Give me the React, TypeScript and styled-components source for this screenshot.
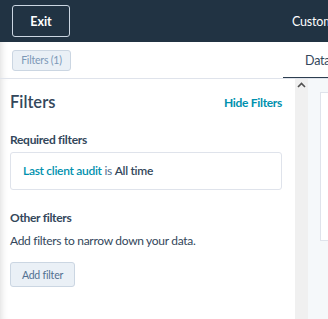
import styled, { createGlobalStyle } from 'styled-components'

const GlobalStyle = createGlobalStyle`
  html, body {
    margin: 0;
    padding: 0;
    background: #ffffff;
  }
  body {
    font-family: Lato, "Liberation Sans", sans-serif;
    color: #33475b;
    overflow: hidden;
  }
`

const Page = styled.div`
  width: 328px;
  height: 319px;
  display: flex;
  flex-direction: column;
  overflow: hidden;
`

const TopBar = styled.header`
  height: 42px;
  flex-shrink: 0;
  background: #213343;
  display: flex;
  align-items: center;
  padding: 0 12px;
  overflow: hidden;
`

const ExitButton = styled.button`
  flex-shrink: 0;
  width: 58px;
  height: 32px;
  border: 1px solid #cbd6e2;
  border-radius: 3px;
  background: transparent;
  color: #ffffff;
  font-family: inherit;
  font-size: 12.5px;
  font-weight: 700;
  padding: 0;
`

const Title = styled.span`
  flex-shrink: 0;
  margin-left: 222px;
  color: #ffffff;
  font-size: 12.5px;
  letter-spacing: -0.2px;
  white-space: nowrap;
`

const SubBar = styled.div`
  height: 36px;
  flex-shrink: 0;
  display: flex;
  align-items: stretch;
  padding-left: 12px;
  border-bottom: 1px solid #dfe3eb;
  box-shadow: inset 8px 0 8px -8px rgba(0, 0, 0, 0.18);
  overflow: hidden;
`

const PillCell = styled.div`
  flex-shrink: 0;
  display: flex;
  align-items: center;
`

const Pill = styled.button`
  width: 59px;
  height: 21px;
  padding: 0;
  border: 1px solid #cbd6e2;
  border-radius: 3px;
  background: #eaf0f6;
  color: #7c98b6;
  font-family: inherit;
  font-size: 10.5px;
  letter-spacing: -0.2px;
`

const Tab = styled.div`
  flex-shrink: 0;
  margin-left: 212px;
  padding-left: 22px;
  display: flex;
  align-items: center;
  font-size: 12.5px;
  letter-spacing: -0.2px;
  color: #33475b;
  white-space: nowrap;
  border-bottom: 3px solid #2d3e50;
  margin-bottom: -2px;
  padding-top: 1px;
`

const Body = styled.div`
  flex: 1;
  display: flex;
  min-height: 0;
`

const Panel = styled.aside`
  width: 295px;
  flex-shrink: 0;
  box-sizing: border-box;
  padding: 11px 13px 0 10px;
  background: #ffffff;
  box-shadow: inset 8px 0 8px -8px rgba(0, 0, 0, 0.18);
  letter-spacing: -0.3px;
`

const PanelHeader = styled.div`
  display: flex;
  align-items: center;
  justify-content: space-between;
  height: 24px;
`

const PanelTitle = styled.h2`
  margin: 0;
  font-size: 16.5px;
  font-weight: 600;
  letter-spacing: 0;
  color: #33475b;
`

const LinkButton = styled.a`
  font-size: 12px;
  font-weight: 700;
  color: #0091ae;
  text-decoration: none;
`

const SectionLabel = styled.h3<{ $top: number }>`
  margin: ${({ $top }) => $top}px 0 0;
  font-size: 12px;
  line-height: 18px;
  font-weight: 700;
  color: #33475b;
`

const FilterBox = styled.div`
  margin-top: 3px;
  padding: 9px 12px;
  border: 1px solid #dfe3eb;
  border-radius: 3px;
  font-size: 12px;
  line-height: 18px;
  color: #516f90;
`

const FilterName = styled.span`
  color: #0091ae;
  font-weight: 600;
`

const FilterValue = styled.span`
  color: #33475b;
  font-weight: 600;
`

const Help = styled.p`
  margin: 5px 0 0;
  font-size: 12px;
  line-height: 18px;
  color: #33475b;
`

const AddButton = styled.button`
  margin-top: 12px;
  width: 65px;
  height: 25px;
  padding: 0;
  border: 1px solid #cbd6e2;
  border-radius: 3px;
  background: #eaf0f6;
  color: #516f90;
  font-family: inherit;
  font-size: 10.5px;
  letter-spacing: -0.2px;
`

const Scrollbar = styled.div`
  width: 13px;
  flex-shrink: 0;
  background: #f0f0f0;
  display: flex;
  justify-content: center;
  padding-top: 3px;
  box-sizing: border-box;
`

const Canvas = styled.main`
  flex: 1;
  background: #f5f8fa;
  padding: 13px 0 0 12px;
  min-width: 0;
`

const Card = styled.div`
  height: 149px;
  background: #ffffff;
  border: 1px solid #dfe3eb;
  border-right: none;
  box-sizing: border-box;
`

function App() {
  return (
    <Page>
      <GlobalStyle />
      <TopBar>
        <ExitButton>Exit</ExitButton>
        <Title>Customize report</Title>
      </TopBar>
      <SubBar>
        <PillCell>
          <Pill>Filters (1)</Pill>
        </PillCell>
        <Tab>Data</Tab>
      </SubBar>
      <Body>
        <Panel>
          <PanelHeader>
            <PanelTitle>Filters</PanelTitle>
            <LinkButton>Hide Filters</LinkButton>
          </PanelHeader>
          <SectionLabel $top={17}>Required filters</SectionLabel>
          <FilterBox>
            <FilterName>Last client audit</FilterName> is <FilterValue>All time</FilterValue>
          </FilterBox>
          <SectionLabel $top={19}>Other filters</SectionLabel>
          <Help>Add filters to narrow down your data.</Help>
          <AddButton>Add filter</AddButton>
        </Panel>
        <Scrollbar>
          <svg width="9" height="6" viewBox="0 0 9 6">
            <path d="M1 5 L4.5 1.5 L8 5" fill="none" stroke="#505050" strokeWidth="1.6" />
          </svg>
        </Scrollbar>
        <Canvas>
          <Card />
        </Canvas>
      </Body>
    </Page>
  )
}

export default App
